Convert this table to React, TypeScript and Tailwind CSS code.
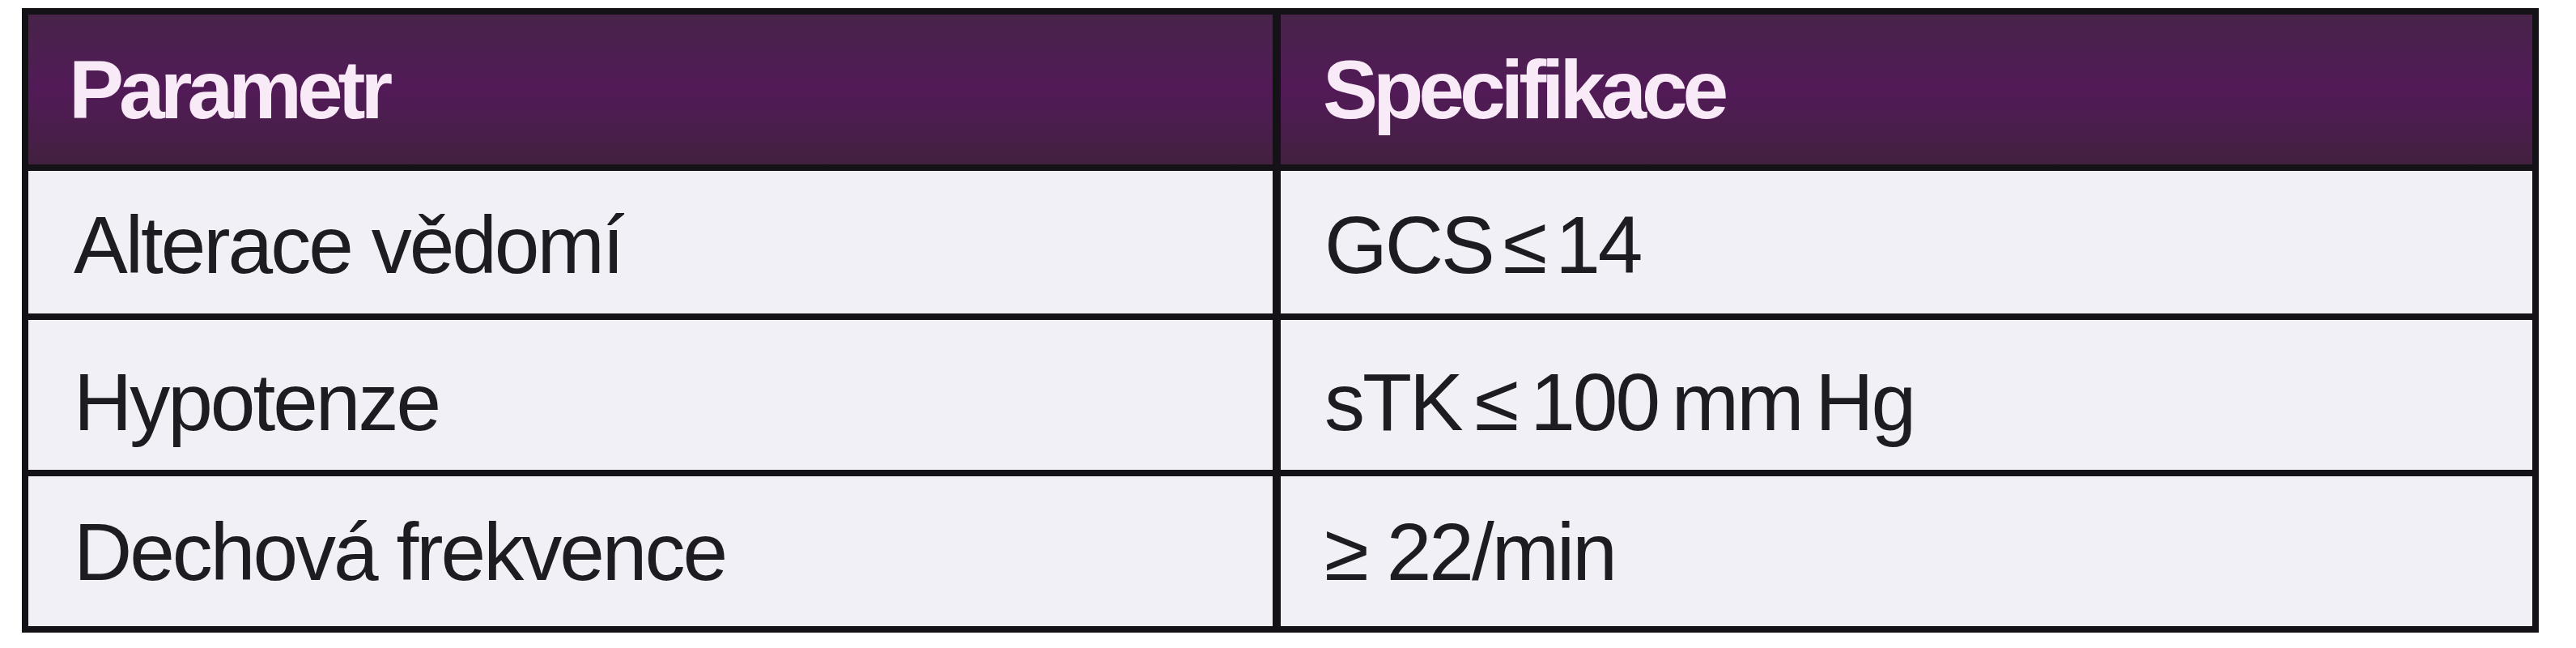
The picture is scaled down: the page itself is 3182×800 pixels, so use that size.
import React from "react";

const rows: { a: string; b: string; pad: string; ws: string }[] = [
  { a: "Alterace vědomí", b: "GCS ≤ 14", pad: "pt-[6px]", ws: "[word-spacing:-12px]" },
  { a: "Hypotenze", b: "sTK ≤ 100 mm Hg", pad: "pt-[16px]", ws: "[word-spacing:-8px]" },
  { a: "Dechová frekvence", b: "≥ 22/min", pad: "pt-0", ws: "[word-spacing:0px]" },
];

export default function App() {
  return (
    <div className="min-h-[800px] w-[3182px] bg-white pt-[10px] pl-[27px]">
      <div
        className="grid w-[3109px] grid-cols-[1537px_1546px] grid-rows-[185px_176px_185px_185px] gap-x-[10px] gap-y-[8px] bg-[#141216] p-[8px]"
        style={{ fontFamily: '"Liberation Sans", Arial, sans-serif' }}
      >
        <div className="flex items-center bg-linear-to-b from-[#472349] via-[#521a58] to-[#42203f] pl-[50px]">
          <span className="text-[102px] leading-none font-bold tracking-[-6px] text-[#f9eaf8]">
            Parametr
          </span>
        </div>
        <div className="flex items-center bg-linear-to-b from-[#472349] via-[#521a58] to-[#42203f] pl-[52px]">
          <span className="text-[102px] leading-none font-bold tracking-[-6px] text-[#f9eaf8]">
            Specifikace
          </span>
        </div>
        {rows.map((r) => (
          <React.Fragment key={r.a}>
            <div className={`flex items-center bg-[#f1f0f6] pl-[56px] ${r.pad}`}>
              <span className="text-[100px] leading-none tracking-[-3px] text-[#1d1c20]">
                {r.a}
              </span>
            </div>
            <div className={`flex items-center bg-[#f1f0f6] pl-[54px] ${r.pad}`}>
              <span className={`text-[100px] leading-none tracking-[-3px] text-[#1d1c20] ${r.ws}`}>
                {r.b}
              </span>
            </div>
          </React.Fragment>
        ))}
      </div>
    </div>
  );
}
